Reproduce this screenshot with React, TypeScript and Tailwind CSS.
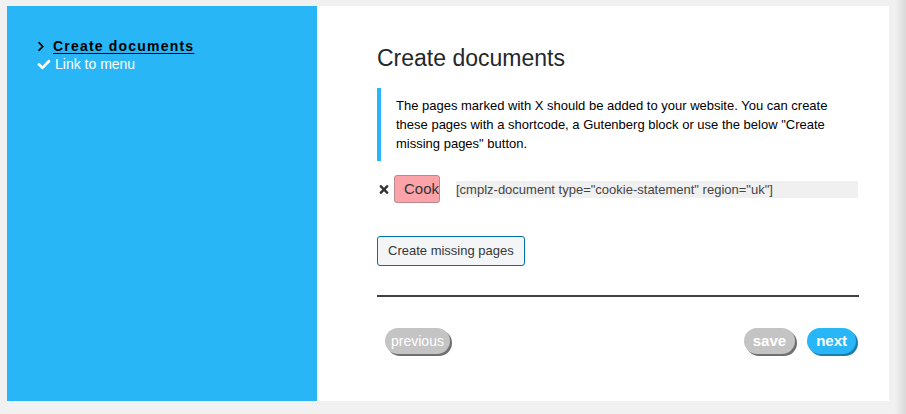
import React from 'react';

const font = { fontFamily: '"Liberation Sans", Arial, sans-serif' };

function ChevronIcon() {
  return (
    <svg viewBox="0 0 320 512" className="h-[11px] w-[8px]" fill="currentColor">
      <path d="M285.476 272.971L91.132 467.314c-9.373 9.373-24.569 9.373-33.941 0l-22.667-22.667c-9.357-9.357-9.375-24.522-.04-33.901L188.505 256 34.484 101.255c-9.335-9.379-9.317-24.544.04-33.901l22.667-22.667c9.373-9.373 24.569-9.373 33.941 0L285.475 239.03c9.373 9.372 9.373 24.568.001 33.941z" />
    </svg>
  );
}

function CheckIcon() {
  return (
    <svg viewBox="0 0 512 512" className="h-[13px] w-[14px]" fill="currentColor">
      <path d="M173.898 439.404l-166.4-166.4c-9.997-9.997-9.997-26.206 0-36.204l36.203-36.204c9.997-9.998 26.207-9.998 36.204 0L192 312.69 432.095 72.596c9.997-9.997 26.207-9.997 36.204 0l36.203 36.204c9.997 9.997 9.997 26.206 0 36.204l-294.4 294.401c-9.998 9.997-26.207 9.997-36.204-.001z" />
    </svg>
  );
}

function TimesIcon() {
  return (
    <svg viewBox="0 0 352 512" className="h-[13px] w-[10px]" fill="currentColor">
      <path d="M242.72 256l100.07-100.07c12.28-12.28 12.28-32.19 0-44.48l-22.24-22.24c-12.28-12.28-32.19-12.28-44.48 0L176 189.28 75.93 89.21c-12.28-12.28-32.19-12.28-44.48 0L9.21 111.45c-12.28 12.28-12.28 32.19 0 44.48L109.28 256 9.21 356.07c-12.28 12.28-12.28 32.19 0 44.48l22.24 22.24c12.28 12.28 32.2 12.28 44.48 0L176 322.72l100.07 100.07c12.28 12.28 32.2 12.28 44.48 0l22.24-22.24c12.28-12.28 12.28-32.19 0-44.48L242.72 256z" />
    </svg>
  );
}

export default function App() {
  return (
    <div className="flex h-[414px] w-[906px] overflow-hidden bg-[#f1f1f1]" style={font}>
      <div className="ml-[7px] mt-[6px] flex h-[395px] w-[882px]">
        {/* steps */}
        <div className="w-[310px] bg-[#29b6f6] pl-[30px] pt-[31px] text-[14px]">
          <div className="flex h-[18px] items-center gap-[8px] text-black">
            <ChevronIcon />
            <span className="font-bold tracking-[1.2px] underline underline-offset-2">Create documents</span>
          </div>
          <div className="flex h-[19px] items-center gap-[4px] text-white">
            <CheckIcon />
            <span>Link to menu</span>
          </div>
        </div>

        {/* content */}
        <div className="flex-1 bg-white pl-[60px] pr-[30px] pt-[37px]">
          <h1 className="text-[23px] leading-[30px] text-[#23282d]">Create documents</h1>

          <div className="mt-[15px] border-l-4 border-[#29b6f6] py-[8px] pl-[15px] pr-[15px] text-[13px] leading-[19px] text-black">
            The pages marked with X should be added to your website. You can create these pages with a shortcode,
            a Gutenberg block or use the below "Create missing pages" button.
          </div>

          <div className="mt-[14px] flex items-center">
            <span className="ml-[2px] mr-[5px] text-[#333]">
              <TimesIcon />
            </span>
            <div className="h-[28px] w-[46px] overflow-hidden whitespace-nowrap rounded-[3px] border border-[#b88a8e] bg-[#fba3a8] pl-[9px] text-[15px] leading-[26px] text-[#333]">
              Cookie
            </div>
            <div className="ml-[16px] mr-[1px] h-[17px] flex-1 bg-[#f0f0f0] text-[13px] leading-[17px] text-[#444]">
              [cmplz-document type="cookie-statement" region="uk"]
            </div>
          </div>

          <button className="mt-[33px] h-[30px] rounded-[3px] border border-[#0071a1] bg-[#f3f5f6] px-[10px] text-[13px] text-[#32373c]">
            Create missing pages
          </button>

          <div className="mt-[29px] h-[2px] w-full bg-[#404040]" />

          <div className="mt-[31px] flex items-center justify-between pl-[8px] pr-[3px]">
            <button className="h-[26px] rounded-full bg-[#c4c4c4] px-[6px] text-[14px] text-white shadow-[2px_2px_0_#707070]">
              previous
            </button>
            <div className="flex gap-[12px]">
              <button className="h-[26px] rounded-full bg-[#c4c4c4] px-[9px] text-[15px] font-bold text-white shadow-[2px_2px_0_#707070]">
                save
              </button>
              <button className="h-[26px] rounded-full bg-[#29b6f6] px-[9px] text-[15px] font-bold text-white shadow-[2px_2px_0_#1b7fae]">
                next
              </button>
            </div>
          </div>
        </div>
      </div>
      <div className="ml-auto h-full w-[11px] bg-gradient-to-r from-[#f1f1f1] to-[#d9d9d9]" />
    </div>
  );
}
